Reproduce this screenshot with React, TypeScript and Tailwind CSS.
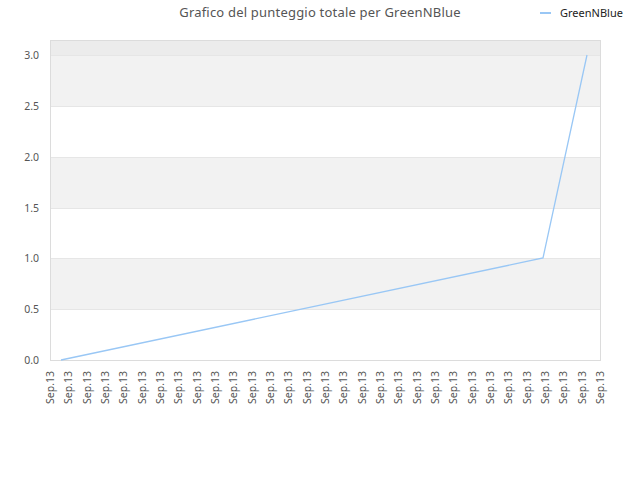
export default function App() {
  const ys = [
    { v: "3.0", y: 55 },
    { v: "2.5", y: 106 },
    { v: "2.0", y: 157 },
    { v: "1.5", y: 208 },
    { v: "1.0", y: 258 },
    { v: "0.5", y: 309 },
    { v: "0.0", y: 360 },
  ];
  const xs = Array.from({ length: 31 }, (_, i) => 50 + (i * 550) / 30);
  return (
    <div className="w-[640px] h-[480px] bg-white flex flex-col font-['DejaVu_Sans',sans-serif]">
      <div className="relative h-[26px] flex justify-center items-start pt-[4px]">
        <span className="text-[13px] leading-[16px] text-[#555] tracking-[0.2px]">Grafico del punteggio totale per GreenNBlue</span>
        <div className="absolute left-[540px] top-[6px] flex items-center gap-[9px]">
          <span className="w-[11px] h-[2px] bg-[#99c7f5]" />
          <span className="text-[11px] leading-[13px] text-[#222]">GreenNBlue</span>
        </div>
      </div>
      <svg width="640" height="454" viewBox="0 26 640 454">
        <rect x="50" y="40" width="550" height="15" fill="#ececec" />
        <rect x="50" y="55" width="550" height="51" fill="#f2f2f2" />
        <rect x="50" y="157" width="550" height="51" fill="#f2f2f2" />
        <rect x="50" y="258" width="550" height="51" fill="#f2f2f2" />
        {ys.map((t) => (
          <g key={t.v}>
            <line x1="50" x2="600" y1={t.y + 0.5} y2={t.y + 0.5} stroke="#e6e6e6" />
            <text x="39" y={t.y + 4} textAnchor="end" fontSize="10.5" fill="#555">{t.v}</text>
          </g>
        ))}
        <rect x="50.5" y="40.5" width="550" height="320" fill="none" stroke="#dcdcdc" />
        <polyline points="61,360 543,258 587,55" fill="none" stroke="#99c7f5" strokeWidth="1.3" />
        {xs.map((x, i) => (
          <text key={i} x={0} y={0} fontSize="10.5" fill="#555" textAnchor="end" transform={`translate(${x + 4},371) rotate(-90)`}>Sep.13</text>
        ))}
      </svg>
    </div>
  );
}
